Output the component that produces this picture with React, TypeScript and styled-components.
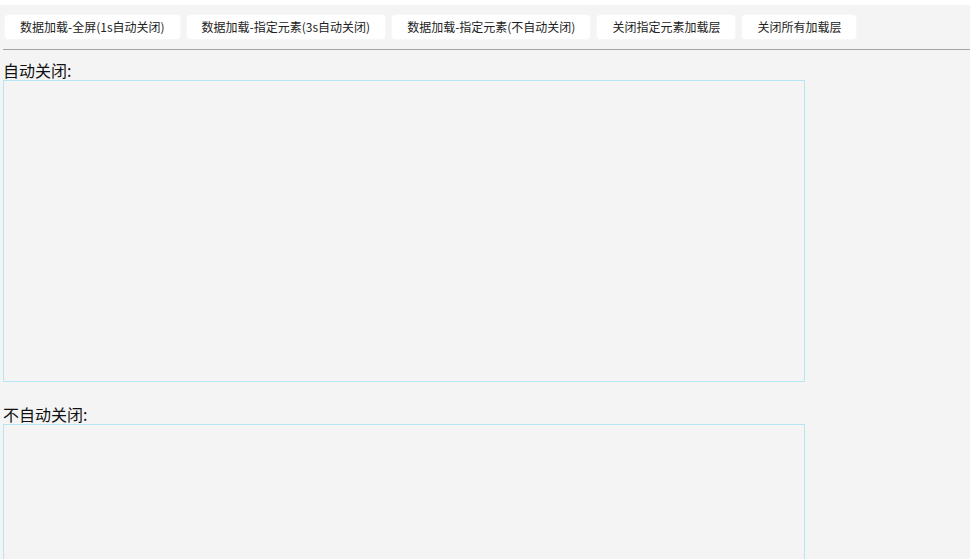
import React from "react";
import styled, { createGlobalStyle } from "styled-components";

const Global = createGlobalStyle`
  html, body { margin: 0; padding: 0; background: #f4f4f4; }
  body { font-family: "Microsoft YaHei", "Noto Sans CJK SC", "Noto Sans", sans-serif; color: #000; }
`;

const TopStrip = styled.div`
  height: 5px;
  background: #ffffff;
`;

const Page = styled.div`
  padding: 9px 0 0 3px;
`;

const Toolbar = styled.div`
  display: flex;
  gap: 5px;
  padding-left: 1px;
`;

const Button = styled.button`
  height: 26px;
  padding: 0 15px;
  border: 1px solid #f7f7f7;
  border-radius: 4px;
  background: #ffffff;
  color: #222;
  font-family: "Microsoft YaHei", "Noto Sans CJK SC", sans-serif;
  font-size: 12px;
  line-height: 24px;
  white-space: nowrap;
  cursor: pointer;
`;

const Rule = styled.div`
  height: 1px;
  background: #a3a3a3;
  margin-top: 9px;
`;

const Section = styled.section<{ $top: number }>`
  margin-top: ${(p) => p.$top}px;
`;

const Label = styled.div`
  font-size: 16px;
  line-height: 19px;
  height: 19px;
  color: #111;
`;

const Box = styled.div`
  box-sizing: border-box;
  width: 802px;
  height: 302px;
  border: 1px solid #b5e6f3;
`;

const buttons = [
  "数据加载-全屏(1s自动关闭)",
  "数据加载-指定元素(3s自动关闭)",
  "数据加载-指定元素(不自动关闭)",
  "关闭指定元素加载层",
  "关闭所有加载层",
];

export default function App() {
  return (
    <>
      <Global />
      <TopStrip />
      <Page>
        <Toolbar>
          {buttons.map((b) => (
            <Button key={b}>{b}</Button>
          ))}
        </Toolbar>
        <Rule />
        <Section $top={11}>
          <Label>自动关闭:</Label>
          <Box />
        </Section>
        <Section $top={23}>
          <Label>不自动关闭:</Label>
          <Box />
        </Section>
      </Page>
    </>
  );
}
